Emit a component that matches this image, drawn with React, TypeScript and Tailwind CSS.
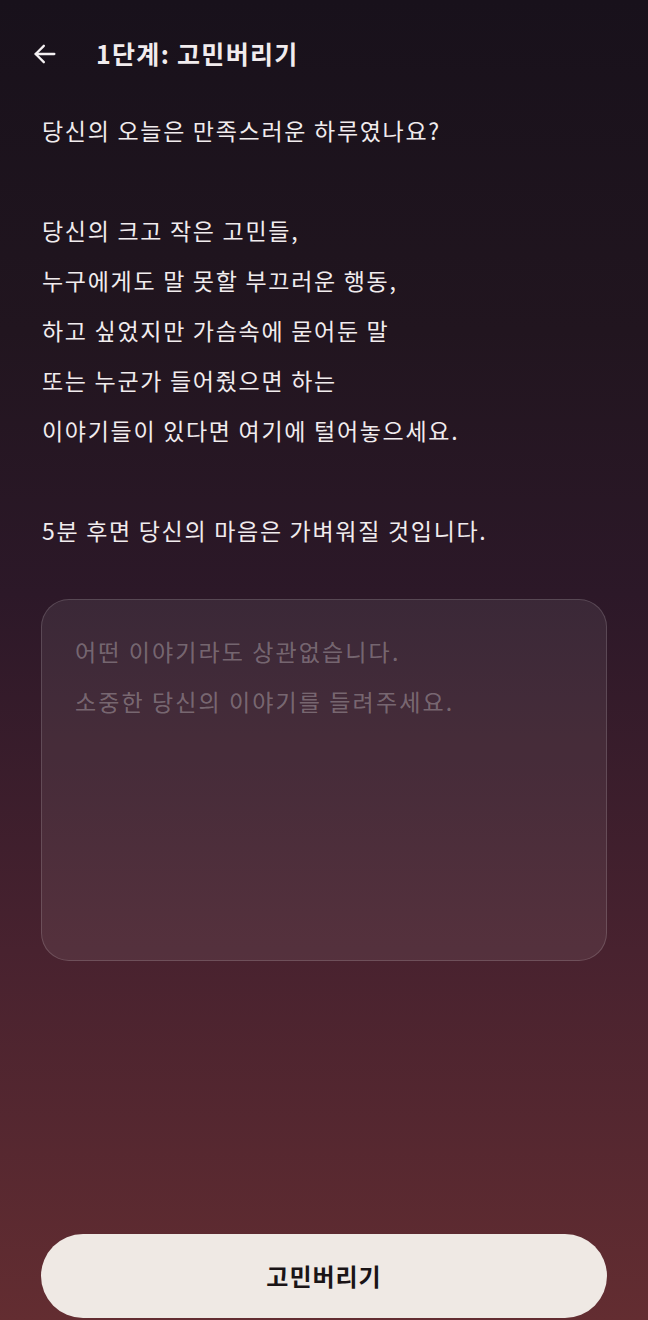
import React from "react";

const font = { fontFamily: '"Noto Sans CJK KR", "Noto Sans", sans-serif' };

export default function App() {
  return (
    <div
      style={font}
      className="w-[648px] h-[1320px] flex flex-col bg-[linear-gradient(180deg,#18111b_0%,#21151f_25%,#2c1828_45%,#48222f_72%,#632d31_100%)] text-[#f1ecee]"
    >
      <header className="h-[105px] flex items-center pl-[31px] gap-[37px] pt-[2px]">
        <svg width="28" height="28" viewBox="0 0 24 24" fill="none" stroke="#f4f0f2" strokeWidth="2" strokeLinecap="round" strokeLinejoin="round">
          <path d="M20 12H4" />
          <path d="M11 5l-7 7 7 7" />
        </svg>
        <h1 className="text-[25px] font-bold tracking-[1.3px] leading-none">1단계: 고민버리기</h1>
      </header>

      <div className="px-[42px] text-[23px] leading-[50px] tracking-[1.7px]">
        <p>당신의 오늘은 만족스러운 하루였나요?</p>
        <p className="h-[50px]"></p>
        <p>당신의 크고 작은 고민들,</p>
        <p>누구에게도 말 못할 부끄러운 행동,</p>
        <p>하고 싶었지만 가슴속에 묻어둔 말</p>
        <p>또는 누군가 들어줬으면 하는</p>
        <p>이야기들이 있다면 여기에 털어놓으세요.</p>
        <p className="h-[50px]"></p>
        <p>5분 후면 당신의 마음은 가벼워질 것입니다.</p>
      </div>

      <div className="mx-[41px] mt-[44px] h-[362px] rounded-[28px] border border-white/15 bg-white/[0.07] px-[33px] pt-[26px]">
        <p className="text-[23px] leading-[50px] tracking-[2.1px] text-white/30">어떤 이야기라도 상관없습니다.</p>
        <p className="text-[23px] leading-[50px] tracking-[2.1px] text-white/30">소중한 당신의 이야기를 들려주세요.</p>
      </div>

      <div className="flex-1" />

      <div className="px-[41px] pb-[2px]">
        <button className="w-full h-[84px] rounded-full bg-[#efe9e4] text-[#1a1416] text-[24px] tracking-[1px] font-bold">
          고민버리기
        </button>
      </div>
    </div>
  );
}
